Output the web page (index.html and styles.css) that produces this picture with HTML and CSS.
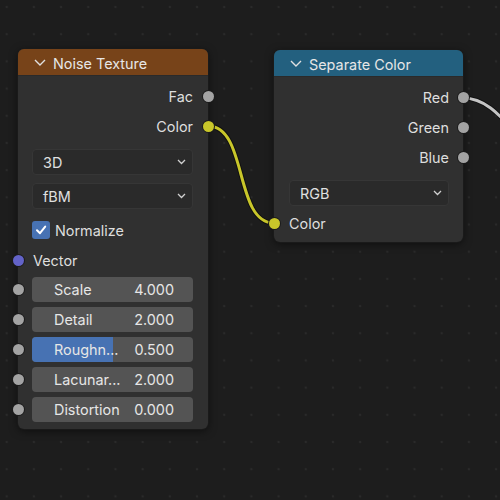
FILE: index.html
```html
<!DOCTYPE html>
<html>
<head>
<meta charset="utf-8">
<link rel="stylesheet" href="styles.css">
</head>
<body>
<div class="canvas">
  <svg class="wires" width="500" height="500" viewBox="0 0 500 500">
    <path class="wire-shadow" d="M208 126 C 248 126, 234 223, 274 223"/>
    <path class="wire yellow" d="M208 126 C 248 126, 234 223, 274 223"/>
    <path class="wire-shadow" d="M463 98 C 505 98, 520 160, 570 170"/>
    <path class="wire gray" d="M463 98 C 505 98, 520 160, 570 170"/>
  </svg>

  <div class="node noise">
    <div class="header brown">
      <svg class="chev" width="12" height="7" viewBox="0 0 12 7"><path d="M1 1 L6 6 L11 1"/></svg>
      <span>Noise Texture</span>
    </div>
    <div class="body body-noise">
      <div class="row out"><span>Fac</span><i class="sock gray-s r"></i></div>
      <div class="row out"><span>Color</span><i class="sock yellow-s r"></i></div>
      <div class="dropdown first"><span>3D</span><svg class="dchev" width="9" height="6" viewBox="0 0 9 6"><path d="M1 1 L4.5 4.5 L8 1"/></svg></div>
      <div class="dropdown"><span>fBM</span><svg class="dchev" width="9" height="6" viewBox="0 0 9 6"><path d="M1 1 L4.5 4.5 L8 1"/></svg></div>
      <div class="row check-row">
        <span class="checkbox"><svg width="14" height="14" viewBox="0 0 14 14"><path d="M3 7.2 L6 10.2 L11.2 3.6"/></svg></span>
        <span>Normalize</span>
      </div>
      <div class="row in"><i class="sock purple-s l"></i><span>Vector</span></div>
      <div class="fields">
        <div class="field"><i class="sock gray-s l"></i><span class="lbl">Scale</span><span class="val">4.000</span></div>
        <div class="field"><i class="sock gray-s l"></i><span class="lbl">Detail</span><span class="val">2.000</span></div>
        <div class="field"><i class="sock gray-s l"></i><b class="fill" style="width:50%"></b><span class="lbl">Roughn...</span><span class="val">0.500</span></div>
        <div class="field"><i class="sock gray-s l"></i><span class="lbl">Lacunar...</span><span class="val">2.000</span></div>
        <div class="field"><i class="sock gray-s l"></i><span class="lbl">Distortion</span><span class="val">0.000</span></div>
      </div>
    </div>
  </div>

  <div class="node sepcolor">
    <div class="header blue">
      <svg class="chev" width="12" height="7" viewBox="0 0 12 7"><path d="M1 1 L6 6 L11 1"/></svg>
      <span>Separate Color</span>
    </div>
    <div class="body body-sep">
      <div class="row out"><span>Red</span><i class="sock gray-s r"></i></div>
      <div class="row out"><span>Green</span><i class="sock gray-s r"></i></div>
      <div class="row out"><span>Blue</span><i class="sock gray-s r"></i></div>
      <div class="dropdown first"><span>RGB</span><svg class="dchev" width="9" height="6" viewBox="0 0 9 6"><path d="M1 1 L4.5 4.5 L8 1"/></svg></div>
      <div class="row in color-in"><i class="sock yellow-s l"></i><span>Color</span></div>
    </div>
  </div>
</div>
</body>
</html>
```

FILE: styles.css
```css
* { box-sizing: border-box; }
html, body { margin: 0; padding: 0; }
body {
  background: #1d1d1d;
  font-family: "Inter", "DejaVu Sans", sans-serif;
  font-size: 14.4px;
  color: #dedede;
}
.canvas {
  position: relative;
  width: 500px;
  height: 500px;
  overflow: hidden;
  background-color: #1d1d1d;
  background-image: radial-gradient(circle, #2a2a2a 0, #2a2a2a 1px, transparent 1.6px);
  background-size: 27.2px 27.2px;
  background-position: -6.9px -6.6px;
}
.wires { position: absolute; left: 0; top: 0; }
.wire { fill: none; stroke-width: 3; stroke-linecap: round; }
.wire-shadow { fill: none; stroke: rgba(0,0,0,0.45); stroke-width: 5; }
.wire.yellow { stroke: #c8c62a; }
.wire.gray { stroke: #c4c4c4; }

.node {
  position: absolute;
  border-radius: 6px;
  background: #303030;
  box-shadow: 0 0 0 1px #1a1a1a, 0 2px 8px rgba(0,0,0,0.55);
}
.noise { left: 18px; top: 49px; width: 190px; }
.sepcolor { left: 274px; top: 50px; width: 189px; }

.header {
  height: 27px;
  border-radius: 6px 6px 0 0;
  display: flex;
  align-items: center;
  padding-left: 16px;
  color: #e6e6e6;
  border-bottom: 1px solid #2a2a2a;
}
.header span { margin-left: 7px; padding-top: 2px; }
.brown { background: #774319; }
.blue { background: #23607f; }
.chev path { fill: none; stroke: #e0e0e0; stroke-width: 1.4; }

.body { display: flex; flex-direction: column; }
.body-noise { padding: 5px 15px 7px 14px; }
.body-sep { padding: 5px 14px 4px 15px; }

.row {
  position: relative;
  height: 30px;
  display: flex;
  align-items: center;
}
.row.out { justify-content: flex-end; }
.body-noise .row.in { padding-left: 1px; }

.sock {
  position: absolute;
  width: 11px;
  height: 11px;
  border-radius: 50%;
  top: 50%;
  margin-top: -5.5px;
  box-shadow: 0 0 0 1px #1c1c1c;
}
.body-noise .sock.r { right: -20.5px; }
.body-sep .sock.r { right: -19.5px; }
.body-noise .sock.l { left: -19.5px; }
.body-sep .sock.l { left: -20.5px; }
.gray-s { background: #a3a3a3; }
.yellow-s { background: #c8c62a; }
.purple-s { background: #6363c8; }

.dropdown {
  height: 26px;
  margin-top: 8px;
  background: #2a2a2a;
  border: 1px solid #363636;
  border-radius: 4px;
  display: flex;
  align-items: center;
  justify-content: space-between;
  padding: 0 6px 0 10px;
  color: #e0e0e0;
}
.dropdown.first { margin-top: 8px; }
.dchev path { fill: none; stroke: #d0d0d0; stroke-width: 1.3; }

.check-row { margin-top: 6px; }
.checkbox {
  width: 18px;
  height: 18px;
  border-radius: 3px;
  background: #4772b3;
  display: flex;
  align-items: center;
  justify-content: center;
  margin-right: 5px;
}
.checkbox path { fill: none; stroke: #fff; stroke-width: 2; stroke-linecap: round; stroke-linejoin: round; }

.fields {
  display: flex;
  flex-direction: column;
  gap: 5px;
  margin-top: 2px;
}
.field {
  position: relative;
  height: 25px;
  background: #545454;
  border-radius: 4px;
  display: flex;
  align-items: center;
  justify-content: space-between;
  padding: 0 19px 0 22px;
  color: #e6e6e6;
}
.field .sock.l { left: -19.5px; }
.fill {
  position: absolute;
  left: 0; top: 0; bottom: 0;
  background: #4772b3;
  border-radius: 4px 0 0 4px;
}
.lbl, .val { position: relative; }

.color-in { margin-top: 2px; }
```
